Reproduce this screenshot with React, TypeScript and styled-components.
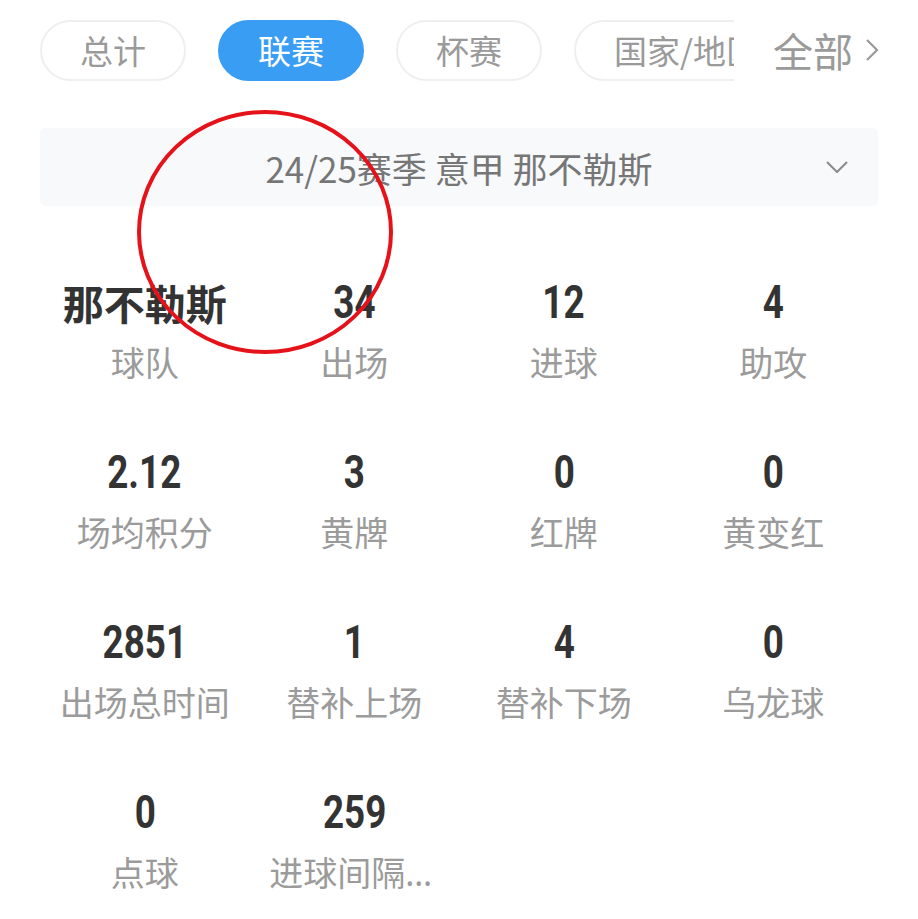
import React from "react";
import styled, { createGlobalStyle } from "styled-components";

const GlobalStyle = createGlobalStyle`
  html, body {
    margin: 0;
    padding: 0;
    background: #ffffff;
  }
  body {
    font-family: "Noto Sans CJK SC", "Noto Sans", sans-serif;
  }
`;

export const Page = styled.div`
  position: relative;
  width: 918px;
  height: 919px;
  overflow: hidden;
  background: #ffffff;
  padding: 0 40px;
  box-sizing: border-box;
`;

export const TabRow = styled.div`
  display: flex;
  align-items: center;
  height: 100px;
`;

export const TabScroll = styled.div`
  display: flex;
  gap: 32px;
  width: 694px;
  overflow: hidden;
  flex-shrink: 0;
`;

export const Tab = styled.div<{ $active?: boolean }>`
  flex-shrink: 0;
  height: 61px;
  padding: 0 38px;
  border-radius: 31px;
  box-sizing: border-box;
  display: flex;
  align-items: center;
  justify-content: center;
  font-size: 33px;
  white-space: nowrap;
  color: ${(p) => (p.$active ? "#ffffff" : "#9a9a9a")};
  background: ${(p) => (p.$active ? "#3a9df4" : "#ffffff")};
  border: 2px solid ${(p) => (p.$active ? "#3a9df4" : "#efefef")};
`;

export const AllLink = styled.div`
  margin-left: 39px;
  display: flex;
  align-items: center;
  gap: 12px;
  font-size: 40px;
  color: #9a9a9a;
  white-space: nowrap;
`;

export const Selector = styled.div`
  margin-top: 28px;
  height: 78px;
  background: #f7f9fb;
  border-radius: 6px;
  position: relative;
  display: flex;
  align-items: center;
  justify-content: center;
  font-size: 35px;
  color: #767676;
`;

export const SelectorArrow = styled.span`
  position: absolute;
  right: 30px;
  top: 50%;
  transform: translateY(-50%);
  display: flex;
`;

export const StatGrid = styled.div`
  margin-top: 68px;
  display: grid;
  grid-template-columns: repeat(4, 1fr);
  row-gap: 57px;
`;

export const StatCell = styled.div`
  display: flex;
  flex-direction: column;
  align-items: center;
`;

export const StatValue = styled.div<{ $text?: boolean }>`
  height: 56px;
  line-height: 56px;
  font-family: ${(p) =>
    p.$text ? `"Noto Sans CJK SC", sans-serif` : `Roboto, "Noto Sans", sans-serif`};
  font-size: ${(p) => (p.$text ? "41px" : "46px")};
  font-weight: 700;
  color: #333333;
  white-space: nowrap;
  transform: ${(p) => (p.$text ? "none" : "scaleX(0.8)")};
`;

export const StatLabel = styled.div`
  margin-top: 9px;
  height: 48px;
  line-height: 48px;
  font-family: "Noto Sans", "Noto Sans CJK SC", sans-serif;
  font-size: 34px;
  color: #9b9b9b;
  max-width: 5em;
  overflow: hidden;
  white-space: nowrap;
  text-overflow: ellipsis;
`;

export const Annotation = styled.svg`
  position: absolute;
  left: 136px;
  top: 109px;
  pointer-events: none;
`;

const tabs = ["总计", "联赛", "杯赛", "国家/地区"];

const stats: { value: string; label: string; text?: boolean }[] = [
  { value: "那不勒斯", label: "球队", text: true },
  { value: "34", label: "出场" },
  { value: "12", label: "进球" },
  { value: "4", label: "助攻" },
  { value: "2.12", label: "场均积分" },
  { value: "3", label: "黄牌" },
  { value: "0", label: "红牌" },
  { value: "0", label: "黄变红" },
  { value: "2851", label: "出场总时间" },
  { value: "1", label: "替补上场" },
  { value: "4", label: "替补下场" },
  { value: "0", label: "乌龙球" },
  { value: "0", label: "点球" },
  { value: "259", label: "进球间隔时间" },
];

const App = () => {
  return (
    <Page>
      <GlobalStyle />
      <TabRow>
        <TabScroll>
          {tabs.map((t) => (
            <Tab key={t} $active={t === "联赛"}>
              {t}
            </Tab>
          ))}
        </TabScroll>
        <AllLink>
          全部
          <svg width="14" height="24" viewBox="0 0 14 24">
            <path d="M2 2 L12 12 L2 22" fill="none" stroke="#9a9a9a" strokeWidth="2.2" />
          </svg>
        </AllLink>
      </TabRow>
      <Selector>
        24/25赛季 意甲 那不勒斯
        <SelectorArrow>
          <svg width="22" height="12" viewBox="0 0 22 12">
            <path d="M1 1 L11 11 L21 1" fill="none" stroke="#8a8a8a" strokeWidth="2" />
          </svg>
        </SelectorArrow>
      </Selector>
      <StatGrid>
        {stats.map((s, i) => (
          <StatCell key={i}>
            <StatValue $text={s.text}>{s.value}</StatValue>
            <StatLabel>{s.label}</StatLabel>
          </StatCell>
        ))}
      </StatGrid>
      <Annotation width="260" height="248" viewBox="0 0 260 248">
        <ellipse cx="129" cy="123" rx="126" ry="120" fill="none" stroke="#e5121a" strokeWidth="4" />
      </Annotation>
    </Page>
  );
};

export default App;
